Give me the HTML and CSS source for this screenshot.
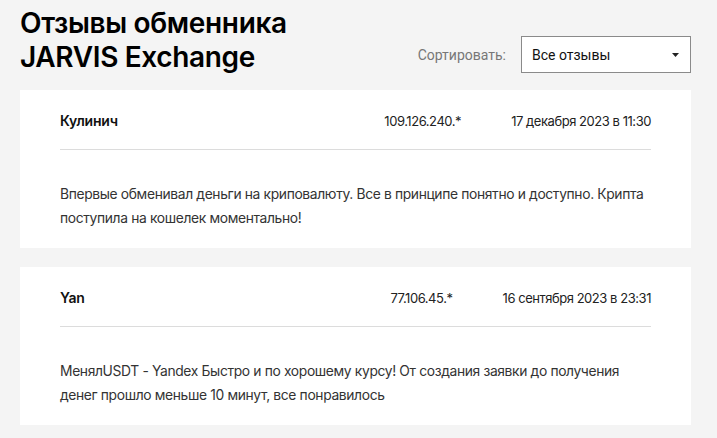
FILE: index.html
```html
<!DOCTYPE html>
<html lang="ru">
<head>
<meta charset="utf-8">
<link rel="stylesheet" href="styles.css">
</head>
<body>
<div class="page">
  <div class="top">
    <h1 class="title">Отзывы обменника<br>JARVIS Exchange</h1>
    <div class="sort">
      <span class="sort-label">Сортировать:</span>
      <div class="select">
        <span>Все отзывы</span>
        <svg class="caret" width="7" height="4" viewBox="0 0 7 4"><path d="M0 0h7L3.5 4z" fill="#222"/></svg>
      </div>
    </div>
  </div>
  <div class="card">
    <div class="head">
      <span class="name">Кулинич</span>
      <div class="meta">
        <span>109.126.240.*</span>
        <span>17 декабря 2023 в 11:30</span>
      </div>
    </div>
    <p class="text">Впервые обменивал деньги на криповалюту. Все в принципе понятно и доступно. Крипта поступила на кошелек моментально!</p>
  </div>
  <div class="card">
    <div class="head">
      <span class="name">Yan</span>
      <div class="meta">
        <span>77.106.45.*</span>
        <span>16 сентября 2023 в 23:31</span>
      </div>
    </div>
    <p class="text">МенялUSDT - Yandex Быстро и по хорошему курсу! От создания заявки до получения<br>денег прошло меньше 10 минут, все понравилось</p>
  </div>
</div>
</body>
</html>
```
FILE: styles.css
```css
html, body {
  margin: 0;
  padding: 0;
  background: #f4f4f4;
}
body {
  font-family: Inter, "Noto Sans", sans-serif;
  color: #111;
}
.page {
  padding: 6px 26px 0 20px;
}
.top {
  display: flex;
  justify-content: space-between;
  align-items: flex-end;
  height: 84px;
}
.title {
  margin: 0;
  font-size: 28px;
  line-height: 34px;
  font-weight: 600;
  letter-spacing: -0.35px;
  color: #000;
  align-self: flex-start;
}
.sort {
  display: flex;
  align-items: center;
  gap: 15px;
  margin-bottom: 17px;
}
.sort-label {
  font-family: Roboto, "Liberation Sans", sans-serif;
  font-size: 14px;
  color: #777;
}
.select {
  box-sizing: border-box;
  width: 170px;
  height: 37px;
  border: 1px solid #8a8a8a;
  background: #fff;
  display: flex;
  align-items: center;
  justify-content: space-between;
  padding: 0 11px 0 10px;
  font-family: Roboto, "Liberation Sans", sans-serif;
  font-size: 14px;
  color: #111;
}
.card {
  background: #fff;
  padding: 0 40px 18px;
  margin-bottom: 19px;
}
.head {
  display: flex;
  justify-content: space-between;
  align-items: center;
  height: 60px;
  padding-top: 2px;
  box-sizing: border-box;
  border-bottom: 1px solid #dcdcdc;
}
.name {
  font-size: 14px;
  font-weight: 600;
  letter-spacing: -0.2px;
  color: #111;
}
.meta {
  display: flex;
  gap: 50px;
  font-size: 13px;
  color: #222;
  letter-spacing: -0.45px;
}
.text {
  margin: 32px 0 0;
  font-size: 13.85px;
  line-height: 24px;
  letter-spacing: -0.36px;
  color: #333;
}
```
